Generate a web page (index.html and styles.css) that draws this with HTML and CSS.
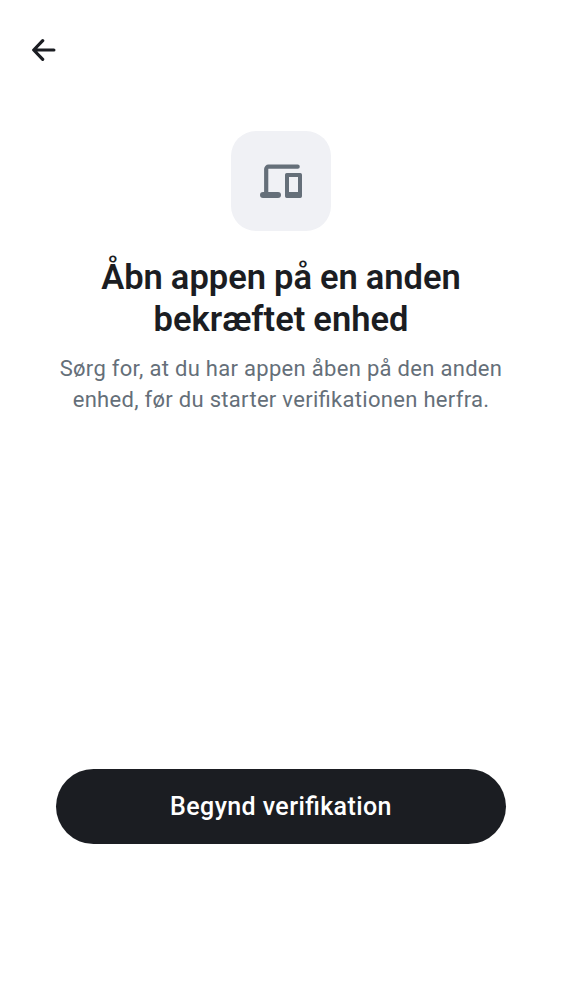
FILE: index.html
```html
<!DOCTYPE html>
<html lang="da">
<head>
<meta charset="utf-8">
<title>Bekræft enhed</title>
<link rel="stylesheet" href="styles.css">
</head>
<body>
<div class="screen">
  <header class="top-bar">
    <button class="back" aria-label="Tilbage">
      <svg class="back-icon" viewBox="0 0 24 22" fill="none" stroke="currentColor" stroke-width="3.200" stroke-linecap="round"><path d="M21.900 11H2.500M10.700 1.700L1.700 11l9 9.300" stroke-linejoin="round"/></svg>
    </button>
  </header>
  <main class="content">
    <div class="hero-icon">
      <svg class="devices" viewBox="0 0 42 34" fill="none" stroke="currentColor" stroke-linecap="round"><path d="M37.700 2.700H8.500a2.300 2.300 0 0 0-2.300 2.300V30" stroke-width="4.200"/><path d="M3 31h15" stroke-width="6"/><path d="M26.700 9h13.600a1.700 1.700 0 0 1 1.700 1.700v21.600a1.700 1.700 0 0 1-1.700 1.700H26.700a1.700 1.700 0 0 1-1.700-1.700V10.700A1.700 1.700 0 0 1 26.700 9zM29 13v15h9V13z" fill="currentColor" fill-rule="evenodd" stroke="none"/></svg>
    </div>
    <h1 class="title">Åbn appen på en anden<br>bekræftet enhed</h1>
    <p class="subtitle">Sørg for, at du har appen åben på den anden<br>enhed, før du starter verifikationen herfra.</p>
  </main>
  <footer class="actions">
    <button class="primary">Begynd verifikation</button>
  </footer>
</div>
</body>
</html>
```
FILE: styles.css
```css
* { box-sizing: border-box; }
body { margin: 0; background: #fff; color: #1b1d22; font-family: Roboto, sans-serif; font-feature-settings: "liga" 1; }
button { border: 0; padding: 0; font: inherit; }
.screen { display: flex; flex-direction: column; height: 1000px; padding: 0 56px 156px; }
.top-bar { display: flex; align-items: center; height: 100px; margin-left: -24px; }
.back { display: flex; background: none; color: inherit; }
.back-icon { width: 24px; height: 22px; }
.content { flex: 1; display: flex; flex-direction: column; align-items: center; padding-top: 31px; text-align: center; white-space: nowrap; }
.hero-icon { display: flex; align-items: center; justify-content: center; width: 100px; height: 100px; border-radius: 25px; background: #f0f1f5; color: #656f79; }
.devices { width: 42px; height: 34px; }
.title { margin: 25px 0 0; font-size: 34.5px; line-height: 42px; font-weight: 600; word-spacing: -0.6px; }
.subtitle { margin: 13px 0 0; font-size: 22px; line-height: 31px; letter-spacing: 0.3px; color: #656f79; }
.actions { display: flex; }
.primary { flex: 1; height: 75px; border-radius: 38px; background: #1b1d22; color: #fff; font-size: 25px; font-weight: 500; letter-spacing: 0.4px; font-feature-settings: "liga" 1; }
```
